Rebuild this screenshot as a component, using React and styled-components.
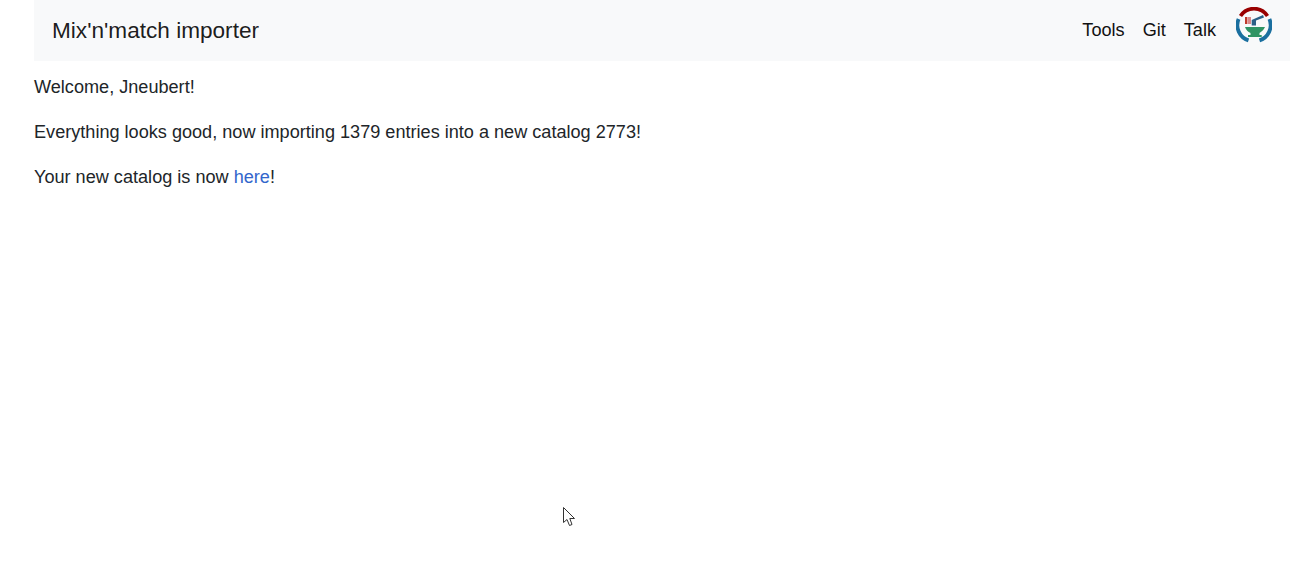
import React from 'react';
import styled, { createGlobalStyle } from 'styled-components';

const GlobalStyle = createGlobalStyle`
html, body {
  margin: 0;
  padding: 0;
  background: #fff;
}
body {
  font-family: "Liberation Sans", Arial, sans-serif;
  font-size: 18.12px;
  line-height: 27px;
  color: #212529;
}
`;

const Page = styled.div`
position: relative;
height: 561px;
padding: 0 13px 0 34px;
overflow: hidden;
`;

const Navbar = styled.nav`
display: flex;
align-items: center;
justify-content: space-between;
height: 61px;
padding: 0 18px;
background-color: #f8f9fa;
`;

const Brand = styled.a`
font-size: 22.6px;
color: rgba(0, 0, 0, 0.9);
`;

const NavLinks = styled.div`
display: flex;
align-self: stretch;
align-items: center;
gap: 18px;
`;

const NavLink = styled.a`
color: #111;
`;

const LogoMark = styled.svg`
align-self: flex-start;
margin: 7px 0 0 2px;
`;

const Main = styled.main`
padding-top: 13px;
`;

const Para = styled.p`
margin: 0 0 18px;
`;

const Link = styled.a`
color: #3366cc;
`;

const Pointer = styled.svg`
position: absolute;
left: 563px;
top: 507px;
`;

const Logo = () => (
  <LogoMark width="36" height="36" viewBox="0 0 36 36">
    <path d="M4.5 9 A16 16 0 0 1 31.5 9" fill="none" stroke="#990000" strokeWidth="3.6" />
    <path d="M2.6 12 A16 16 0 0 0 12.5 33.4" fill="none" stroke="#1a6f9f" strokeWidth="3.8" />
    <path d="M33.4 12 A16 16 0 0 1 23.5 33.4" fill="none" stroke="#1a6f9f" strokeWidth="3.8" />
    <path d="M9 20 H29 C28 23 25 25 23.5 26 V28 H25.7 V30 H12 V28 H14.5 V26 C12 25 10 23 9 20 Z" fill="#2f9464" />
    <path d="M15.7 13 L27 8 L28 10.5 L20 13.5 V18.5 H15.7 Z" fill="#2a5f86" />
    <rect x="9" y="10" width="2.4" height="7" fill="#c0392b" />
    <rect x="12" y="10" width="3" height="7" fill="#d98a8a" />
  </LogoMark>
);

export default function App() {
  return (
    <>
      <GlobalStyle />
      <Page>
        <Navbar>
          <Brand>Mix'n'match importer</Brand>
          <NavLinks>
            <NavLink>Tools</NavLink>
            <NavLink>Git</NavLink>
            <NavLink>Talk</NavLink>
            <Logo />
          </NavLinks>
        </Navbar>
        <Main>
          <Para>Welcome, Jneubert!</Para>
          <Para>Everything looks good, now importing 1379 entries into a new catalog 2773!</Para>
          <Para>Your new catalog is now <Link>here</Link>!</Para>
        </Main>
        <Pointer width="13" height="20" viewBox="0 0 13 20">
          <path d="M0.5 0.5 V15.5 L4 12.5 L6.5 18.5 L9 17.5 L6.8 11.5 H11.5 Z" fill="#fff" stroke="#333" strokeWidth="1" />
        </Pointer>
      </Page>
    </>
  );
}
